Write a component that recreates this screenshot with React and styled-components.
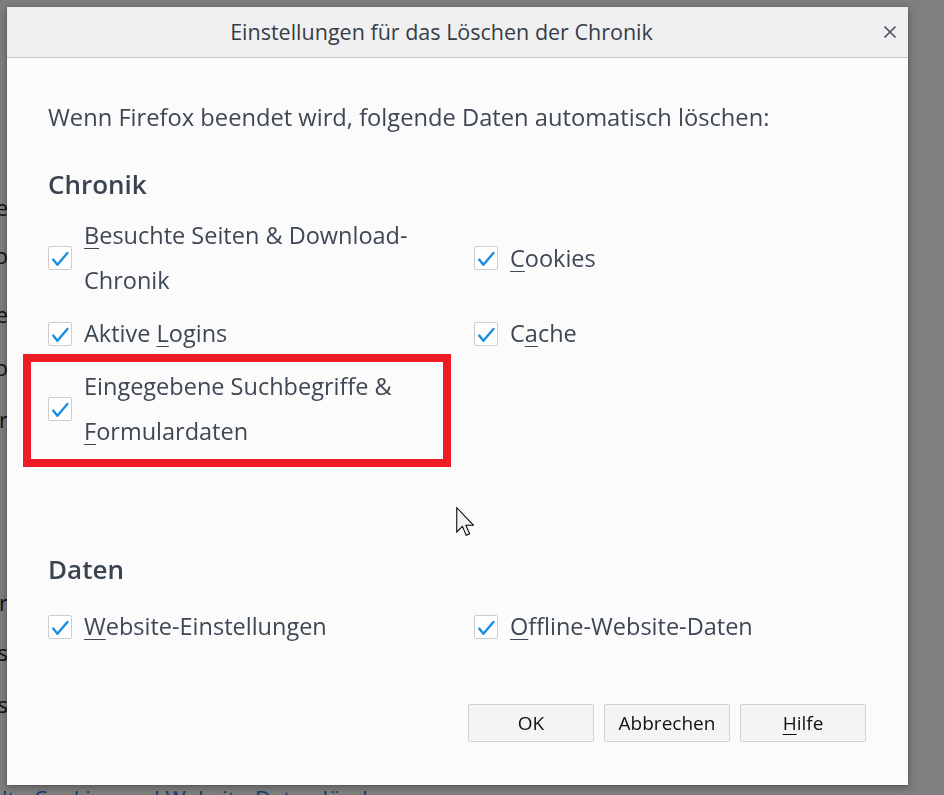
import React from 'react';
import styled, { createGlobalStyle } from 'styled-components';

const GlobalStyle = createGlobalStyle`
  html, body {
    margin: 0;
    padding: 0;
  }
  body {
    width: 944px;
    height: 795px;
    overflow: hidden;
    background: #7f7f7f;
    font-family: 'Open Sans', 'Noto Sans', sans-serif;
  }
`;

const edgeLines = [
  { text: 'Seite', gap: 192 },
  { text: 'Info', gap: 18 },
  { text: 'Suche', gap: 29 },
  { text: 'Logo', gap: 23 },
  { text: 'Formular', gap: 22 },
  { text: 'Anbieter', gap: 153 },
  { text: 'Cookies', gap: 20 },
  { text: 'Websites', gap: 22 },
];

const chronikOptions = [
  { text: 'Besuchte Seiten & Download-Chronik', ak: 0 },
  { text: 'Cookies', ak: 0 },
  { text: 'Aktive Logins', ak: 7 },
  { text: 'Cache', ak: 1 },
  { text: 'Eingegebene Suchbegriffe & Formulardaten', ak: 27, marked: true },
];

const datenOptions = [
  { text: 'Website-Einstellungen', ak: 0 },
  { text: 'Offline-Website-Daten', ak: 0 },
];

const Backdrop = styled.div`
  width: 944px;
  height: 795px;
  display: flex;
  flex-direction: column;
  overflow: hidden;
  background: #7f7f7f;
`;

const EdgeColumn = styled.div`
  width: 8px;
  flex-shrink: 0;
  overflow: hidden;
  display: flex;
  flex-direction: column;
  font-size: 22px;
  line-height: 30px;
  color: #111;
`;

const EdgeLine = styled.div`
  display: flex;
  justify-content: flex-end;
  white-space: nowrap;
  margin-top: ${(p) => p.$gap}px;
`;

const BottomLink = styled.div`
  flex-shrink: 0;
  margin: 64px 0 0 -12px;
  font-size: 22px;
  line-height: 30px;
  white-space: nowrap;
  color: #123f73;
`;

const Dialog = styled.section`
  position: fixed;
  left: 7px;
  top: 7px;
  width: 901px;
  height: 778px;
  display: flex;
  flex-direction: column;
  background: #fbfbfb;
  color: #3e4754;
  box-shadow: 0 0 0 1px rgba(0, 0, 0, 0.06), 0 2px 8px rgba(0, 0, 0, 0.35);
`;

const TitleBar = styled.header`
  height: 50px;
  flex-shrink: 0;
  display: flex;
  align-items: center;
  background: #f0f0f0;
  border-bottom: 1px solid #c6c6c6;
`;

const Title = styled.h1`
  flex: 1;
  margin: 0;
  padding-left: 4px;
  text-align: center;
  font-size: 21.5px;
  font-weight: 400;
  line-height: 50px;
  color: #363d48;
`;

const CloseButton = styled.button`
  width: 36px;
  height: 50px;
  padding: 0;
  border: 0;
  background: transparent;
  display: flex;
  align-items: center;
  justify-content: center;
`;

const Body = styled.div`
  flex: 1;
  display: flex;
  flex-direction: column;
  padding: 37px 42px 43px 41px;
`;

const Intro = styled.p`
  margin: 0;
  font-size: 23.7px;
  line-height: 44px;
`;

const SectionHeading = styled.h2`
  margin: ${(p) => p.$top}px 0 ${(p) => p.$bottom}px;
  font-size: 26px;
  font-weight: 600;
  line-height: 36px;
  color: #3a4350;
`;

const OptionGrid = styled.div`
  display: grid;
  grid-template-columns: 426px 1fr;
  row-gap: 8px;
`;

const Option = styled.label`
  position: relative;
  display: flex;
  align-items: center;
  gap: 12px;
  font-size: 23.5px;
  line-height: 45px;
`;

const Box = styled.span`
  width: 24px;
  height: 24px;
  flex-shrink: 0;
  box-sizing: border-box;
  display: flex;
  border: 1px solid #cdcdcd;
  border-radius: 2px;
  background: #fff;
`;

const Label = styled.span`
  max-width: 380px;
`;

const AccessKey = styled.u`
  text-decoration-thickness: 1px;
  text-underline-offset: 4px;
`;

const Highlight = styled.span`
  position: absolute;
  top: -10px;
  left: -25px;
  width: 428px;
  height: 113px;
  box-sizing: border-box;
  border: 8px solid #ed1c24;
  pointer-events: none;
`;

const ButtonRow = styled.div`
  margin-top: auto;
  display: flex;
  justify-content: flex-end;
  gap: 10px;
`;

const Button = styled.button`
  width: 126px;
  height: 38px;
  padding: 0;
  box-sizing: border-box;
  border: 1px solid #d2d2d2;
  border-radius: 2px;
  background: #f4f4f4;
  font-family: inherit;
  font-size: 19px;
  color: #111;
`;

const Pointer = styled.svg`
  position: absolute;
  left: 449px;
  top: 500px;
`;

const Check = () => (
  <svg width="22" height="22" viewBox="0 0 22 22">
    <path d="M4.2 12.6 L8.4 17.8 L18.4 6" fill="none" stroke="#1b8de0" strokeWidth="2.4" strokeLinecap="round" strokeLinejoin="round" />
  </svg>
);

const withKey = (text, ak) => (
  <>
    {text.slice(0, ak)}
    <AccessKey>{text[ak]}</AccessKey>
    {text.slice(ak + 1)}
  </>
);

const CheckOption = ({ text, ak, marked }) => (
  <Option>
    <Box>
      <Check />
    </Box>
    <Label>{withKey(text, ak)}</Label>
    {marked && <Highlight />}
  </Option>
);

export default function App() {
  return (
    <>
      <GlobalStyle />
      <Backdrop>
        <EdgeColumn>
          {edgeLines.map((l, i) => (
            <EdgeLine key={i} $gap={l.gap}>{l.text}</EdgeLine>
          ))}
        </EdgeColumn>
        <BottomLink>Alte Cookies und Website-Daten löschen</BottomLink>
      </Backdrop>
      <Dialog>
        <TitleBar>
          <Title>Einstellungen für das Löschen der Chronik</Title>
          <CloseButton aria-label="Schließen">
            <svg width="14" height="14" viewBox="0 0 14 14">
              <path d="M1.5 1.5 L12.5 12.5 M12.5 1.5 L1.5 12.5" stroke="#4b5562" strokeWidth="1.7" />
            </svg>
          </CloseButton>
        </TitleBar>
        <Body>
          <Intro>Wenn Firefox beendet wird, folgende Daten automatisch löschen:</Intro>
          <SectionHeading $top={27} $bottom={11}>Chronik</SectionHeading>
          <OptionGrid>
            {chronikOptions.map((o) => (
              <CheckOption key={o.text} {...o} />
            ))}
          </OptionGrid>
          <SectionHeading $top={97} $bottom={17}>Daten</SectionHeading>
          <OptionGrid>
            {datenOptions.map((o) => (
              <CheckOption key={o.text} {...o} />
            ))}
          </OptionGrid>
          <ButtonRow>
            <Button>OK</Button>
            <Button>Abbrechen</Button>
            <Button>{withKey('Hilfe', 0)}</Button>
          </ButtonRow>
        </Body>
        <Pointer width="18" height="30" viewBox="0 0 12 20">
          <path d="M0.5 0.5 L0.5 16.6 L4.3 12.9 L6.8 18.9 L9.1 17.9 L6.6 12.1 L11.6 12.1 Z" fill="#f2f2f2" stroke="#000" strokeWidth="0.7" strokeLinejoin="miter" />
        </Pointer>
      </Dialog>
    </>
  );
}
